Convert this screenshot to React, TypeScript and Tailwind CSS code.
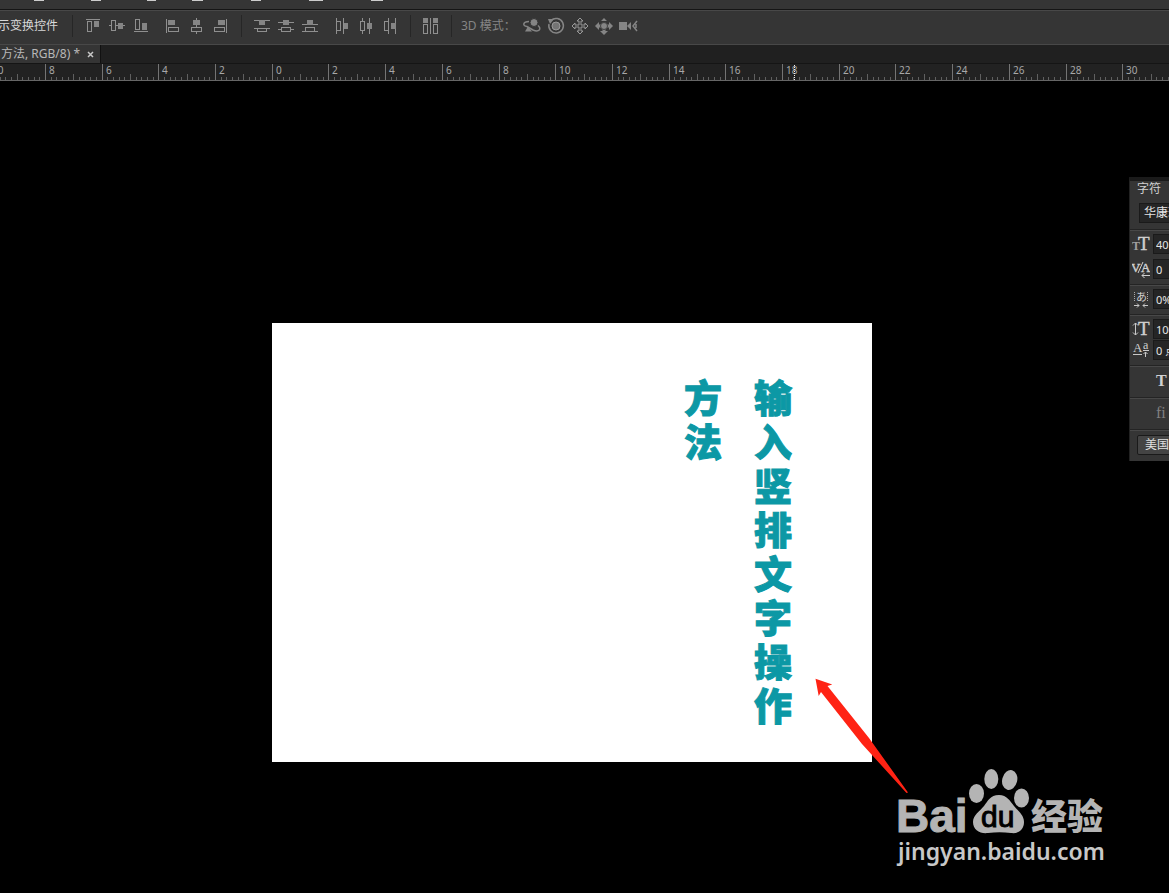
import type { ReactNode } from "react";

const CM = 28.35;
const ZERO = 272.2;

// bits of the menu labels that hang over the top edge
const menuBits = [[34, 10], [91, 10], [147, 9], [192, 11], [251, 10], [309, 14], [371, 12]];

function Tool({ label, children }: { label: string; children: ReactNode }) {
  return (
    <button aria-label={label} className="block h-4 w-4">
      <svg width="16" height="16" viewBox="0 0 16 16" fill="none" stroke="#8f8f8f" shapeRendering="crispEdges" className="overflow-visible">
        {children}
      </svg>
    </button>
  );
}

function Mode({ label, children }: { label: string; children: ReactNode }) {
  return (
    <button aria-label={label} className="block h-4 w-4">
      <svg width="16" height="16" viewBox="0 0 16 16" fill="none" stroke="#858585" className="overflow-visible">
        {children}
      </svg>
    </button>
  );
}

function Solid(props: { x: number; y: number; w: number; h: number }) {
  return <rect x={props.x} y={props.y} width={props.w} height={props.h} fill="#858585" stroke="none" />;
}

function Divider() {
  return <span className="mx-3 h-[22px] w-px bg-[#262626]" />;
}

function OptionsBar() {
  return (
    <div className="flex h-[34px] items-center overflow-hidden border-t border-[#484848] bg-[#353535] pb-[3px] text-xs">
      <div className="flex w-[60px] shrink-0 justify-end pr-0.5 whitespace-nowrap text-[#d8d8d8]">示变换控件</div>
      <Divider />
      <div className="flex gap-4">
        <div className="flex gap-2">
          <Tool label="顶对齐">
            <path d="M1 1.5h14M2.5 3.5h4v10h-4z" />
            <Solid x={9} y={3} w={5} h={6} />
          </Tool>
          <Tool label="垂直居中对齐">
            <path d="M0 7.5h2M6 7.5h10M2.5 2.5h4v10h-4z" />
            <Solid x={9} y={5} w={5} h={6} />
          </Tool>
          <Tool label="底对齐">
            <path d="M1 13.5h14M2.5 1.5h4v10h-4z" />
            <Solid x={9} y={5} w={5} h={7} />
          </Tool>
        </div>
        <div className="flex gap-2">
          <Tool label="左对齐">
            <path d="M1.5 1v14M3.5 9.5h10v4h-10z" />
            <Solid x={3} y={2} w={7} h={5} />
          </Tool>
          <Tool label="水平居中对齐">
            <path d="M7.5 0v9M7.5 13v3M2.5 9.5h10v4h-10z" />
            <Solid x={4} y={2} w={7} h={5} />
          </Tool>
          <Tool label="右对齐">
            <path d="M13.5 1v14M1.5 9.5h10v4h-10z" />
            <Solid x={5} y={2} w={7} h={5} />
          </Tool>
        </div>
      </div>
      <Divider />
      <div className="flex gap-4">
        <div className="flex gap-2">
          <Tool label="按顶分布">
            <path d="M0 2.5h16M0 10.5h16M3.5 10.5h9v3h-9z" />
            <Solid x={5} y={2} w={6} h={5} />
          </Tool>
          <Tool label="垂直居中分布">
            <path d="M0 4.5h16M0 11.5h3M13 11.5h3M3.5 9.5h9v4h-9z" />
            <Solid x={5} y={2} w={6} h={5} />
          </Tool>
          <Tool label="按底分布">
            <path d="M0 6.5h16M0 13.5h16M3.5 9.5h9v4h-9z" />
            <Solid x={5} y={2} w={6} h={5} />
          </Tool>
        </div>
        <div className="flex gap-2">
          <Tool label="按左分布">
            <path d="M2.5 0v16M9.5 0v16M2.5 3.5h4v9h-4z" />
            <Solid x={10} y={5} w={4} h={6} />
          </Tool>
          <Tool label="水平分布">
            <path d="M4.5 0v3M4.5 12v4M11.5 0v16M2.5 3.5h4v9h-4z" />
            <Solid x={9} y={5} w={5} h={6} />
          </Tool>
          <Tool label="按右分布">
            <path d="M6.5 0v16M13.5 0v16M2.5 3.5h4v9h-4z" />
            <Solid x={9} y={5} w={5} h={6} />
          </Tool>
        </div>
      </div>
      <Divider />
      <Tool label="自动对齐图层">
        <path d="M7.5 0v16M.5 6.5h4v9h-4zM10.5 6.5h4v9h-4z" />
        <Solid x={0} y={0} w={5} h={5} />
        <Solid x={10} y={0} w={5} h={5} />
      </Tool>
      <span className="ml-3 mr-[9px] h-[22px] w-px bg-[#262626]" />
      <span className="w-[63px] shrink-0 whitespace-nowrap text-[#858585]">3D 模式：</span>
      <div className="flex gap-2">
        <Mode label="旋转 3D 对象">
          <path d="M5 3.500C-1 3.500-2 8 3 8.500L9 12C15 14.500 18 11 14 7.500" strokeWidth="1.500" />
          <circle cx="10" cy="4.500" r="4" fill="#858585" stroke="#353535" />
          <path d="M1 13.500l3-5 4 5z" fill="#858585" stroke="none" />
        </Mode>
        <Mode label="滚动 3D 对象">
          <path d="M3 2.500A7.300 7.300 0 1 1 1 6" strokeWidth="1.500" />
          <circle cx="8" cy="8" r="4" fill="#747474" stroke="#999" />
          <path d="M0 1h6L2 6z" fill="#858585" stroke="none" />
        </Mode>
        <Mode label="拖动 3D 对象">
          <path d="M8 0l3 3H9v4h4V5l3 3-3 3V9H9v4h2l-3 3-3-3h2V9H3v2L0 8l3-3v2h4V3H5z" stroke="#999" />
        </Mode>
        <Mode label="滑动 3D 对象">
          <path d="M-1 8l4-4v2.500h10V4l4 4-4 4V9.500H3V12zM8 0l3 3H5zM8 17l-4-4h2.500v-3h3v3H12z" fill="#858585" stroke="none" />
          <circle cx="8" cy="8" r="3.500" fill="#858585" stroke="#404040" />
        </Mode>
        <Mode label="缩放 3D 对象">
          <path d="M-1 4h8v8h-8zM7 8l4-4v8z" fill="#858585" stroke="none" />
          <path d="M17 3l-4 5 4 5M16 6v4" strokeWidth="1.500" />
        </Mode>
      </div>
    </div>
  );
}

function Ruler() {
  const ticks = [];
  for (let i = -50; i <= 320; i++) {
    const x = Math.floor(ZERO + (i * CM) / 5) + 0.5;
    // ten steps between two numbered marks
    const step = ((i % 10) + 10) % 10;
    const h = step === 0 ? 16 : step === 5 ? 6 : 3;
    ticks.push(<path key={i} d={`M${x} 16v-${h}`} stroke={step === 0 ? "#747474" : "#606060"} />);
  }
  const labels = [];
  for (let n = -10; n <= 60; n += 2) {
    labels.push(
      <text key={n} x={Math.floor(ZERO + n * CM) + 4} y="10">{Math.abs(n)}</text>
    );
  }
  return (
    <div className="h-[18px] overflow-hidden border-t border-[#151515] border-b border-b-[#666] bg-[#222]">
      <svg width="100%" height="16" fill="#a8a8a8" fontSize="10" fontFamily="'Noto Sans', sans-serif">
        {ticks}
        {labels}
        <path d="M794.500 1v15" stroke="#eee" strokeDasharray="1 1" />
      </svg>
    </div>
  );
}

function Field({ label, value, icon }: { label: string; value: string; icon: ReactNode }) {
  return (
    <label className="flex h-5 items-center gap-[3px] pl-0.5">
      <svg width="18" height="18" viewBox="0 0 18 18" fill="#d0d0d0" stroke="none" fontFamily="'Liberation Serif', serif" className="shrink-0">
        {icon}
      </svg>
      <input aria-label={label} defaultValue={value} className="h-5 w-16 border border-[#1a1a1a] bg-[#252525] pl-0.5 text-[11px] text-[#e4e4e4] outline-none" />
    </label>
  );
}

function CharacterPanel() {
  const section = "border-t border-[#484848] shadow-[0_-1px_0_#242424]";
  return (
    <aside className="absolute top-24 right-0 w-10 overflow-hidden border-t-4 border-l border-t-[#1a1a1a] border-l-[#222] bg-[#353535] text-xs text-[#d0d0d0]">
      <h2 className="h-[22px] pl-[7px] leading-4 whitespace-nowrap">字符</h2>
      <div className="h-[27px] pl-[9px]">
        <select aria-label="字体" className="h-5 w-24 appearance-none border border-[#1a1a1a] bg-[#252525] pl-1 text-[#e4e4e4]">
          <option>华康琥</option>
        </select>
      </div>
      <div className={`flex h-[55px] flex-col gap-[5px] pt-[3px] ${section}`}>
        <Field label="字体大小" value="40" icon={<><text x="0" y="15" fontSize="12" fontWeight="700" fill="#a0a0a0">T</text><text x="6" y="15" fontSize="19" stroke="#d0d0d0" strokeWidth="0.4">T</text></>} />
        <Field label="字距微调" value="0" icon={<><text x="-1" y="12" fontSize="13" stroke="#d0d0d0" strokeWidth="0.4">V</text><text x="9" y="12" fontSize="13" stroke="#d0d0d0" strokeWidth="0.4">A</text><path d="M6 13L11 2M10 15.500h8M12.500 13l-2.500 2.500 2.500 2.500" stroke="#d0d0d0" fill="none" /></>} />
      </div>
      <div className={`h-[30px] pt-[3px] ${section}`}>
        <Field label="比例间距" value="0%" icon={<><text x="4" y="11" fontSize="11" fontFamily="'Noto Sans CJK JP', sans-serif">あ</text><path d="M2.500 2v10M15.500 2v10" stroke="#aaa" strokeDasharray="1 1" /><path d="M2 15.500h5M5 13.500l2 2-2 2M16 15.500h-5M13 13.500l-2 2 2 2" stroke="#c8c8c8" fill="none" /></>} />
      </div>
      <div className={`flex h-[51px] flex-col gap-px pt-[3px] ${section}`}>
        <Field label="垂直缩放" value="100%" icon={<><text x="6" y="15" fontSize="19" stroke="#d0d0d0" strokeWidth="0.4">T</text><path d="M3.500 3v12M1 5.500L3.500 3 6 5.500M1 12.500L3.500 15 6 12.500" stroke="#c8c8c8" fill="none" /></>} />
        <Field label="基线偏移" value="0 点" icon={<><text x="1" y="11" fontSize="13">A</text><text x="11" y="8" fontSize="12">a</text><path d="M1 13.500h9M11 9.500h6M13.500 16v-5M11.500 13l2-2 2 2" stroke="#c8c8c8" fill="none" /></>} />
      </div>
      <div className={`h-8 pl-[26px] ${section}`}>
        <button className="h-7 font-['Liberation_Serif',serif] text-base font-bold">T</button>
      </div>
      <div className={`h-8 pl-[26px] ${section}`}>
        <button className="h-7 font-['Liberation_Serif',serif] text-base text-[#808080]">fi</button>
      </div>
      <div className={`h-[31px] pt-1 pl-[7px] ${section}`}>
        <select aria-label="语言" className="h-5 w-24 appearance-none rounded-xs border border-[#1a1a1a] bg-[#444] pl-[7px] text-[#e0e0e0]">
          <option>美国</option>
        </select>
      </div>
    </aside>
  );
}

function Watermark() {
  return (
    <svg width="216" height="100" viewBox="896 767 216 100" fill="#b4b4b4" className="absolute top-[686px] left-[896px]">
      <g fontFamily="'Liberation Sans', sans-serif" fontWeight="700">
        <text x="896" y="832" fontSize="46" stroke="#b4b4b4">Bai</text>
        <ellipse cx="976.500" cy="793.500" rx="7.500" ry="9.500" />
        <ellipse cx="991.300" cy="779" rx="7" ry="10" />
        <ellipse cx="1009.700" cy="780" rx="7.500" ry="10" transform="rotate(14 1009.700 780)" />
        <ellipse cx="1021.500" cy="798" rx="7.500" ry="9.500" />
        <path d="M999 795C1007 795 1010 801 1014 806C1018 811 1024 815 1024 822C1024 830 1018 834 1011 833C1003 832 996 832 988 833C980 834 973 830 973 822C973 815 980 811 984 806C988 801 990 795 999 795Z" />
        <text x="981" y="827" fontSize="30" fontWeight="400" fill="#000" stroke="#000">du</text>
      </g>
      <text x="1031" y="830" fontSize="36" fontWeight="900" fontFamily="'Noto Sans CJK SC', sans-serif">经验</text>
      <text x="898" y="860" fontSize="23" fontWeight="600" fill="#c8c8c8" fontFamily="'Noto Sans', sans-serif">jingyan.baidu.com</text>
    </svg>
  );
}

export default function App() {
  return (
    <div className="flex min-h-screen flex-col overflow-hidden bg-black font-['Noto_Sans','Noto_Sans_CJK_SC',sans-serif]">
      <div className="h-[10px] border-b border-[#151515] bg-[#353535]">
        <svg width="100%" height="1" fill="#ccc" className="block">
          {menuBits.map(([x, w]) => (
            <rect key={x} x={x} y="0" width={w} height="1" />
          ))}
        </svg>
      </div>
      <OptionsBar />
      <div className="flex h-[19px] border-t border-[#484848] bg-[#202020] text-xs text-[#b8b8b8]">
        <div className="flex items-center gap-[7px] border-r border-[#111] bg-[#353535] pr-1.5 pl-px">
          <span className="whitespace-nowrap">方法, RGB/8) *</span>
          <button aria-label="关闭" className="block">
            <svg width="7" height="7" viewBox="0 0 7 7" stroke="#c8c8c8" strokeWidth="1.500"><path d="M1 1l5 5M6 1L1 6" /></svg>
          </button>
        </div>
      </div>
      <Ruler />
      <main className="relative flex-1">
        <div className="mt-[242px] ml-[272px] flex h-[439px] w-[600px] flex-row-reverse gap-[30px] bg-white pt-[51px] pr-[79px] font-['Noto_Sans_CJK_SC',sans-serif] text-[38px] leading-[44px] font-black text-[#0c98a5] [-webkit-text-stroke:1px_#0c98a5]">
          <p className="w-10 text-center break-all">输入竖排文字操作</p>
          <p className="w-10 text-center break-all">方法</p>
        </div>
        <CharacterPanel />
        <svg width="94" height="116" viewBox="815 678 94 116" fill="#ff2314" className="absolute top-[597px] left-[815px]">
          <path d="M815.500 678.700L832.300 684.500L827.500 686L869 738L908 792.500L906.500 793L862 744L821 692L818.700 696Z" />
        </svg>
        <Watermark />
      </main>
    </div>
  );
}
